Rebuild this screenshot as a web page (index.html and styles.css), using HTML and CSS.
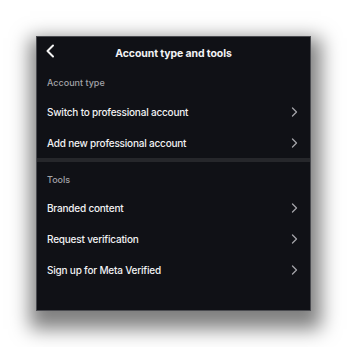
FILE: index.html
```html
<!DOCTYPE html>
<html>
<head>
<meta charset="utf-8">
<link rel="stylesheet" href="styles.css">
</head>
<body>
<div class="stage">
  <div class="panel">
    <div class="header">
      <svg class="back" width="10" height="14" viewBox="0 0 10 14"><path d="M8 1.5 L2.5 7 L8 12.5" fill="none" stroke="#f4f4f4" stroke-width="2" stroke-linecap="round" stroke-linejoin="round"/></svg>
      <div class="title">Account type and tools</div>
    </div>
    <div class="label">Account type</div>
    <div class="item"><span>Switch to professional account</span><svg class="chev" width="7" height="10" viewBox="0 0 7 10"><path d="M1.5 1 L5.5 5 L1.5 9" fill="none" stroke="#a3a3a8" stroke-width="1.3" stroke-linecap="round" stroke-linejoin="round"/></svg></div>
    <div class="item"><span>Add new professional account</span><svg class="chev" width="7" height="10" viewBox="0 0 7 10"><path d="M1.5 1 L5.5 5 L1.5 9" fill="none" stroke="#a3a3a8" stroke-width="1.3" stroke-linecap="round" stroke-linejoin="round"/></svg></div>
    <div class="sep"></div>
    <div class="label tools">Tools</div>
    <div class="item"><span>Branded content</span><svg class="chev" width="7" height="10" viewBox="0 0 7 10"><path d="M1.5 1 L5.5 5 L1.5 9" fill="none" stroke="#a3a3a8" stroke-width="1.3" stroke-linecap="round" stroke-linejoin="round"/></svg></div>
    <div class="item"><span>Request verification</span><svg class="chev" width="7" height="10" viewBox="0 0 7 10"><path d="M1.5 1 L5.5 5 L1.5 9" fill="none" stroke="#a3a3a8" stroke-width="1.3" stroke-linecap="round" stroke-linejoin="round"/></svg></div>
    <div class="item"><span>Sign up for Meta Verified</span><svg class="chev" width="7" height="10" viewBox="0 0 7 10"><path d="M1.5 1 L5.5 5 L1.5 9" fill="none" stroke="#a3a3a8" stroke-width="1.3" stroke-linecap="round" stroke-linejoin="round"/></svg></div>
  </div>
</div>
</body>
</html>
```
FILE: styles.css
```css
html, body {
  margin: 0;
  padding: 0;
  background: #ffffff;
}
.stage {
  width: 347px;
  height: 347px;
  padding: 36px;
  box-sizing: border-box;
}
.panel {
  width: 275px;
  height: 275px;
  background: #101116;
  box-sizing: border-box;
  border: 1px solid #4a4b50;
  box-shadow: 2px 10px 18px 8px rgba(0,0,0,0.5);
  font-family: Inter, "Liberation Sans", sans-serif;
  color: #f2f2f4;
  display: flex;
  flex-direction: column;
}
.header {
  height: 29px;
  display: flex;
  align-items: center;
  justify-content: center;
  position: relative;
}
.back {
  position: absolute;
  left: 8px;
  top: 7px;
}
.title {
  font-size: 10.5px;
  font-weight: 700;
  margin-top: 3px;
  letter-spacing: -0.1px;
}
.label {
  height: 30px;
  box-sizing: border-box;
  padding: 10px 0 0 10px;
  line-height: 14px;
  font-size: 9px;
  font-weight: 500;
  color: #a2a3a8;
}
.label.tools {
  padding-top: 11px;
}
.item {
  height: 31px;
  display: flex;
  align-items: center;
  justify-content: space-between;
  padding: 0 12px 0 10px;
  font-size: 10px;
  font-weight: 500;
  letter-spacing: -0.2px;
}
.sep {
  height: 4px;
  background: #26272b;
}
```
